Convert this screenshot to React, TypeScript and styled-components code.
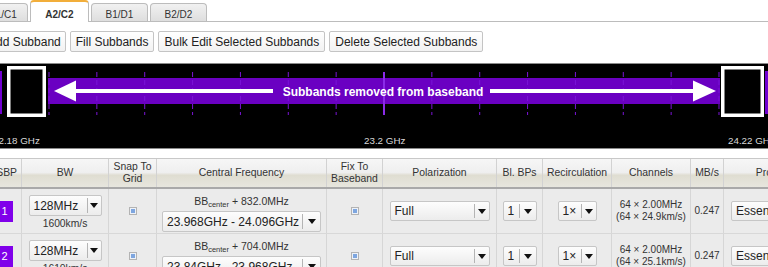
import React from "react";
import styled, { createGlobalStyle } from "styled-components";

const GlobalStyle = createGlobalStyle`
  html, body {
    margin: 0;
    padding: 0;
    background: #fff;
    overflow: hidden;
  }
  body {
    font-family: "Liberation Sans", Arial, sans-serif;
    color: #222;
  }
`;

const COLS = "34px 87px 48px 170px 56px 114px 46px 69px 79px 33px 116px";

const Page = styled.div`
  width: 840px;
  margin-left: -30px;
`;

const TabBar = styled.div`
  display: flex;
  align-items: flex-end;
  gap: 2px;
  height: 21px;
  padding-left: 1px;
  border-bottom: 1px solid #bcbcbc;
`;

const Tab = styled.div<{ $active?: boolean }>`
  box-sizing: border-box;
  width: ${(p) => (p.$active ? 59 : 57)}px;
  height: ${(p) => (p.$active ? 22 : 18)}px;
  margin-bottom: ${(p) => (p.$active ? -1 : 0)}px;
  padding-top: ${(p) => (p.$active ? 7 : 5)}px;
  text-align: center;
  font-size: 10px;
  line-height: 12px;
  font-weight: ${(p) => (p.$active ? 700 : 400)};
  color: #333;
  border: 1px solid #bcbcbc;
  border-top: ${(p) => (p.$active ? "2px solid #f2ae3a" : "1px solid #bcbcbc")};
  border-bottom: none;
  border-radius: 4px 4px 0 0;
  background: ${(p) => (p.$active ? "#fff" : "linear-gradient(#f1f1f1, #dedede)")};

  &:first-child {
    padding-left: 7px;
  }
`;

const Toolbar = styled.div`
  display: flex;
  gap: 4px;
  margin-top: 9px;
  padding-left: 14px;
`;

const ActionButton = styled.button`
  height: 21px;
  padding: 0 5px;
  font-family: "Liberation Sans", Arial, sans-serif;
  font-size: 12px;
  color: #222;
  border: 1px solid #c4c4c4;
  border-radius: 2px;
  background: linear-gradient(#ffffff, #f2f2f2);

  &:first-child {
    padding: 0 4px 0 3px;
  }
`;

const Spectrum = styled.div`
  box-sizing: border-box;
  height: 86px;
  margin-top: 11px;
  background: #000;
  border-top: 1px solid #8a8a8a;
  border-bottom: 1px solid #8a8a8a;

  svg {
    display: block;
  }
`;

const Grid = styled.div`
  margin-top: 9px;
  margin-left: 18px;
  border-top: 1px solid #c8c8c8;
`;

const HeaderRow = styled.div`
  box-sizing: border-box;
  display: grid;
  grid-template-columns: ${COLS};
  height: 30px;
  border-bottom: 2px solid #a9a9a9;
  background: linear-gradient(#f6f6f6 0%, #efefef 48%, #dfddd1 58%, #e7e6de 100%);
`;

const HeadCell = styled.div<{ $end?: boolean }>`
  display: flex;
  align-items: center;
  justify-content: ${(p) => (p.$end ? "flex-end" : "center")};
  padding-right: ${(p) => (p.$end ? 4 : 0)}px;
  text-align: center;
  border-right: 1px solid #d2d2d2;
  font-size: 10.4px;
  line-height: 12px;
  color: #333;
  white-space: nowrap;
  overflow: hidden;
`;

const Row = styled.div`
  box-sizing: border-box;
  display: grid;
  grid-template-columns: ${COLS};
  height: 45px;
  border-bottom: 1px solid #d8d8d8;
  background: #ebebeb;
`;

const Cell = styled.div<{ $top?: boolean; $start?: boolean }>`
  display: flex;
  flex-direction: column;
  align-items: ${(p) => (p.$start ? "flex-start" : "center")};
  justify-content: ${(p) => (p.$top ? "flex-start" : "center")};
  padding-top: ${(p) => (p.$top ? 6 : 0)}px;
  padding-left: ${(p) => (p.$start ? 7 : 0)}px;
  border-right: 1px solid #d6d6d6;
  overflow: hidden;
  box-sizing: border-box;
`;

const IndexBadge = styled.div`
  width: 16px;
  height: 21px;
  display: flex;
  align-items: center;
  justify-content: center;
  background: #8000ea;
  color: #fff;
  font-size: 11px;
`;

const Select = styled.div<{ $w: number; $h?: number }>`
  box-sizing: border-box;
  display: flex;
  width: ${(p) => p.$w}px;
  height: ${(p) => p.$h ?? 21}px;
  flex-shrink: 0;
  border: 1px solid #c6c6c6;
  border-radius: 2px;
  background: linear-gradient(#fdfdfd, #ececec);
`;

const SelectLabel = styled.span`
  flex: 1;
  display: flex;
  align-items: center;
  padding-left: 4px;
  font-size: 12px;
  color: #222;
  white-space: nowrap;
  overflow: hidden;
`;

const SelectArrow = styled.span<{ $w: number }>`
  box-sizing: border-box;
  width: ${(p) => p.$w}px;
  margin: 2px 0;
  display: flex;
  align-items: center;
  justify-content: center;
  border-left: 1px solid #b4b4b4;

  &::after {
    content: "";
    border-left: 4px solid transparent;
    border-right: 4px solid transparent;
    border-top: 5px solid #111;
  }
`;

const SmallText = styled.div<{ $size?: number }>`
  font-size: ${(p) => p.$size ?? 10}px;
  line-height: 12px;
  color: #333;
  white-space: nowrap;
  text-align: center;
`;

const Check = styled.span`
  box-sizing: border-box;
  width: 8px;
  height: 8px;
  display: flex;
  align-items: center;
  justify-content: center;
  border: 1px solid #b3b3b3;
  background: #eef2f8;

  &::after {
    content: "";
    width: 4px;
    height: 4px;
    background: #7ea6df;
  }
`;

const Sub = styled.sub`
  font-size: 7.5px;
  vertical-align: -2px;
`;

function Dropdown({ label, w, arrow, h }: { label: string; w: number; arrow: number; h?: number }) {
  return (
    <Select $w={w} $h={h}>
      <SelectLabel>{label}</SelectLabel>
      <SelectArrow $w={arrow} />
    </Select>
  );
}

const ticks = Array.from({ length: 15 }, (_, i) => 49 + i * 47.857);

function SpectrumView() {
  return (
    <Spectrum>
      <svg width={840} height={84} viewBox="-30 64 840 84">
        <rect x={-1} y={71} width={3} height={43} fill="#7000d0" />
        <rect x={765} y={71} width={3} height={43} fill="#7000d0" />
        <rect x={48} y={78} width={672} height={26} fill="#6a00c2" />
        {ticks.map((x, i) =>
          i === 7 ? (
            <line key={i} x1={384} x2={384} y1={72} y2={115} stroke="#8b2be8" strokeWidth={2} />
          ) : (
            <line
              key={i}
              x1={x}
              x2={x}
              y1={72}
              y2={115}
              stroke="#7a14d6"
              strokeWidth={1}
              strokeDasharray="5 3"
            />
          )
        )}
        <rect x={8.75} y={67.75} width={35.5} height={47.5} fill="#000" stroke="#fff" strokeWidth={3.5} />
        <rect x={722.75} y={67.75} width={39.5} height={47.5} fill="#000" stroke="#fff" strokeWidth={3.5} />
        <rect x={76} y={89} width={197} height={4} fill="#fff" />
        <rect x={490} y={89} width={203} height={4} fill="#fff" />
        <polygon points="54,91 76,80.5 76,101.5" fill="#fff" />
        <polygon points="716,91 693,80.5 693,101.5" fill="#fff" />
        <text
          x={383}
          y={95.5}
          textAnchor="middle"
          fontFamily="Liberation Sans, Arial, sans-serif"
          fontSize={12}
          fontWeight={700}
          fill="#fff"
        >
          Subbands removed from baseband
        </text>
        <g fontFamily="Liberation Sans, Arial, sans-serif" fontSize={9.8} fill="#d8d8d8">
          <text x={-7} y={143.5}>22.18 GHz</text>
          <text x={364} y={143.5}>23.2 GHz</text>
          <text x={728} y={143.5}>24.22 GHz</text>
        </g>
      </svg>
    </Spectrum>
  );
}

interface Subband {
  index: number;
  kms: string;
  offset: string;
  range: string;
  resolution: string;
}

const subbands: Subband[] = [
  { index: 1, kms: "1600km/s", offset: "832.0MHz", range: "23.968GHz - 24.096GHz", resolution: "24.9km/s" },
  { index: 2, kms: "1610km/s", offset: "704.0MHz", range: "23.84GHz - 23.968GHz", resolution: "25.1km/s" },
];

function SubbandRow({ sb }: { sb: Subband }) {
  return (
    <Row>
      <Cell>
        <IndexBadge>{sb.index}</IndexBadge>
      </Cell>
      <Cell $top>
        <Dropdown label="128MHz" w={73} arrow={14} />
        <SmallText $size={10.3} style={{ marginTop: 2 }}>{sb.kms}</SmallText>
      </Cell>
      <Cell>
        <Check />
      </Cell>
      <Cell $top>
        <SmallText $size={10.5}>
          BB<Sub>center</Sub> + {sb.offset}
        </SmallText>
        <Dropdown label={sb.range} w={159} arrow={18} />
      </Cell>
      <Cell>
        <Check />
      </Cell>
      <Cell>
        <Dropdown label="Full" w={100} arrow={15} h={20} />
      </Cell>
      <Cell>
        <Dropdown label="1" w={34} arrow={17} h={20} />
      </Cell>
      <Cell>
        <Dropdown label="1×" w={39} arrow={15} h={20} />
      </Cell>
      <Cell>
        <SmallText>64 × 2.00MHz</SmallText>
        <SmallText>(64 × {sb.resolution})</SmallText>
      </Cell>
      <Cell>
        <SmallText>0.247</SmallText>
      </Cell>
      <Cell $start>
        <Dropdown label="Essential" w={96} arrow={15} h={20} />
      </Cell>
    </Row>
  );
}

export default function App() {
  return (
    <Page>
      <GlobalStyle />
      <TabBar>
        <Tab>A1/C1</Tab>
        <Tab $active>A2/C2</Tab>
        <Tab>B1/D1</Tab>
        <Tab>B2/D2</Tab>
      </TabBar>
      <Toolbar>
        <ActionButton>Add Subband</ActionButton>
        <ActionButton>Fill Subbands</ActionButton>
        <ActionButton>Bulk Edit Selected Subbands</ActionButton>
        <ActionButton>Delete Selected Subbands</ActionButton>
      </Toolbar>
      <SpectrumView />
      <Grid>
        <HeaderRow>
          <HeadCell $end>SBP</HeadCell>
          <HeadCell>BW</HeadCell>
          <HeadCell>
            Snap To
            <br />
            Grid
          </HeadCell>
          <HeadCell>Central Frequency</HeadCell>
          <HeadCell>
            Fix To
            <br />
            Baseband
          </HeadCell>
          <HeadCell>Polarization</HeadCell>
          <HeadCell>Bl. BPs</HeadCell>
          <HeadCell>Recirculation</HeadCell>
          <HeadCell>Channels</HeadCell>
          <HeadCell>MB/s</HeadCell>
          <HeadCell>Processing</HeadCell>
        </HeaderRow>
        {subbands.map((sb) => (
          <SubbandRow key={sb.index} sb={sb} />
        ))}
      </Grid>
    </Page>
  );
}
